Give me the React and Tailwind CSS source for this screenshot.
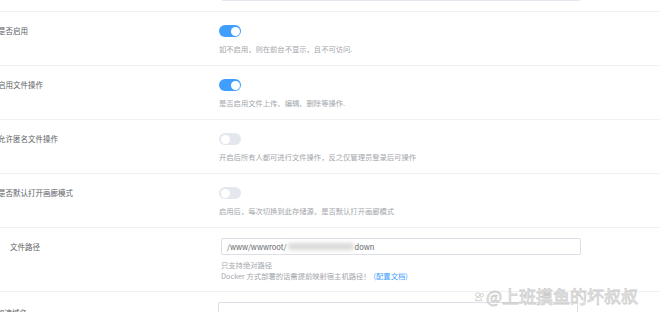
import React from 'react'

const toggles = [
  { label: '是否启用', on: true, help: '如不启用，则在前台不显示，且不可访问.' },
  { label: '启用文件操作', on: true, help: '是否启用文件上传、编辑、删除等操作.' },
  { label: '允许匿名文件操作', on: false, help: '开启后所有人都可进行文件操作，反之仅管理员登录后可操作' },
  { label: '是否默认打开画廊模式', on: false, help: '启用后，每次切换到此存储源，是否默认打开画廊模式' },
]

function Switch({ on }) {
  return (
    <div
      className={`w-[22px] h-[12px] rounded-full flex items-center px-[1.5px] ${
        on ? 'bg-[#409eff] justify-end' : 'bg-[#e4e7ed] justify-start'
      }`}
    >
      <div className="w-[9px] h-[9px] rounded-full bg-white" />
    </div>
  )
}

export default function App() {
  return (
    <div
      className="relative w-[660px] h-[312px] overflow-hidden bg-white text-[#606266]"
      style={{ fontFamily: '"Noto Sans CJK SC", "Noto Sans", sans-serif' }}
    >
      {/* tail of the previous field */}
      <div className="h-[12px] border-b border-[#f0f1f4] flex overflow-hidden">
        <div className="w-[221px] shrink-0" />
        <div className="w-[360px] h-[17px] -mt-[16px] border border-[#e4e7ed] rounded-[2px]" />
      </div>

      {toggles.map((t) => (
        <div key={t.label} className="flex border-b border-[#f0f1f4] pt-[13px] pb-[11px]">
          <div className="w-[221px] shrink-0 -ml-[2px] pr-[2px]">
            <span className="block text-[7.5px] leading-[12px] text-[#606266]">{t.label}</span>
          </div>
          <div className="flex-1">
            <Switch on={t.on} />
            <div className="mt-[7px] text-[7.3px] leading-[10px] text-[#a3a6ab]">{t.help}</div>
          </div>
        </div>
      ))}

      {/* file path */}
      <div className="flex border-b border-[#f0f1f4] pt-[10px] pb-[9px]">
        <div className="w-[221px] shrink-0 pl-[10px]">
          <span className="block text-[7.5px] leading-[17px] text-[#606266]">文件路径</span>
        </div>
        <div className="flex-1">
          <div className="w-[360px] h-[17px] border border-[#dcdfe6] rounded-[2px] flex items-center px-[5px] text-[7.5px] text-[#606266]">
            <span>/www/wwwroot/</span>
            <span className="w-[66px] h-[7px] mx-[1px] bg-[#d8d8d8] blur-[2px] rounded-[2px]" />
            <span>down</span>
          </div>
          <div className="mt-[5px] text-[7.3px] leading-[11px] text-[#a3a6ab]">
            <div>只支持绝对路径</div>
            <div>
              Docker 方式部署的话需提前映射宿主机路径！
              <span className="ml-[3px] text-[#409eff]">(配置文档)</span>
            </div>
          </div>
        </div>
      </div>

      {/* next field, cut off */}
      <div className="flex pt-[10px]">
        <div className="w-[221px] shrink-0 -ml-[3px]">
          <span className="block text-[7.5px] leading-[17px] pt-[2px] text-[#606266]">加速域名</span>
        </div>
        <div className="flex-1">
          <div className="w-[360px] h-[17px] border border-[#dcdfe6] rounded-[2px]" />
        </div>
      </div>

      {/* watermark */}
      <div className="absolute left-[474px] top-[286px] flex items-center gap-[1px] text-white [-webkit-text-stroke:0.8px_#cdcdcd]">
        <svg width="11" height="11" viewBox="0 0 12 12" fill="none" stroke="#cdcdcd" strokeWidth="1">
          <circle cx="4" cy="4" r="2.2" />
          <circle cx="8.5" cy="4.5" r="1.8" />
          <path d="M1.5 10.5c0-2 1.5-3.5 3.5-3.5s3.5 1.5 3.5 3.5z" />
        </svg>
        <span className="text-[17px] leading-[20px]">@上班摸鱼的坏叔叔</span>
      </div>
    </div>
  )
}
